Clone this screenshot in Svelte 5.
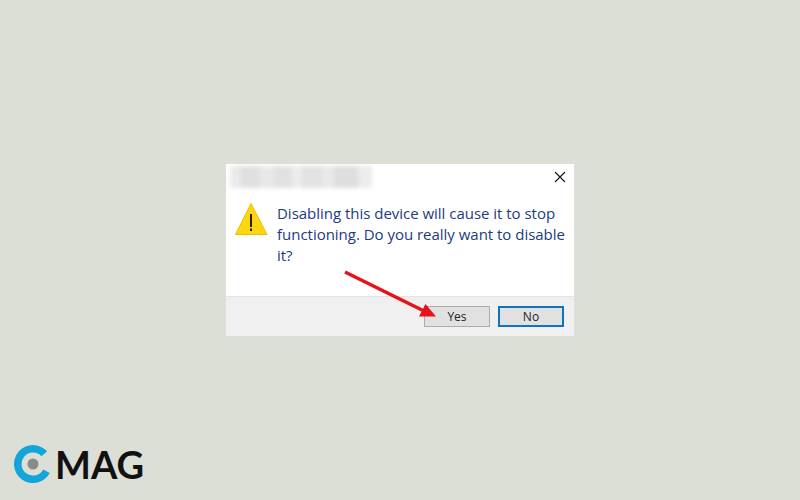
<script>
  const message = "Disabling this device will cause it to stop functioning. Do you really want to disable it?";
</script>

<div class="page">
  <div class="dialog">
    <div class="titlebar">
      <div class="blurred-title"></div>
      <svg class="close" width="12" height="12" viewBox="0 0 12 12">
        <path d="M1 1 L11 11 M11 1 L1 11" stroke="#111" stroke-width="1.1" fill="none" />
      </svg>
    </div>
    <div class="body">
      <svg class="warn" width="34" height="34" viewBox="0 0 34 34">
        <path d="M16 1.500 L32 32.500 L0.500 32.500 Z" fill="#fdd60f" stroke="#eebd00" stroke-width="1" stroke-linejoin="round" />
        <rect x="15" y="12" width="2" height="13" fill="#222" />
        <rect x="15" y="26.500" width="2" height="2.500" fill="#222" />
      </svg>
      <p class="message">{message}</p>
    </div>
    <div class="footer">
      <button class="btn">Yes</button>
      <button class="btn primary">No</button>
    </div>
    <svg class="arrow" width="110" height="60" viewBox="0 0 110 60">
      <path d="M1 2 L82 42" stroke="#e6131b" stroke-width="3.500" fill="none" />
      <path d="M92 46.500 L75 46.500 L81.500 34 Z" fill="#e6131b" />
    </svg>
  </div>
  <div class="logo">
    <svg width="38" height="38" viewBox="0 0 38 38">
      <path d="M33.100 6.300 A19 19 0 1 0 35.800 27.900 L29.200 24.400 A11.500 11.500 0 1 1 27.500 11.300 Z" fill="#12a5dc" />
      <circle cx="19" cy="19" r="5.500" fill="#8a8a8a" />
    </svg>
    <span class="mag">MAG</span>
  </div>
</div>

<style>
  :global(body) {
    margin: 0;
  }
  .page {
    width: 800px;
    height: 500px;
    background: #dcdfd6;
    position: relative;
    display: flex;
    align-items: center;
    justify-content: center;
    overflow: hidden;
  }
  .dialog {
    width: 348px;
    height: 172px;
    background: #fff;
    display: flex;
    flex-direction: column;
    position: relative;
  }
  .titlebar {
    height: 25px;
    display: flex;
    align-items: center;
    justify-content: space-between;
    padding: 0 8px 0 4px;
    flex-shrink: 0;
  }
  .blurred-title {
    width: 142px;
    height: 22px;
    background: linear-gradient(90deg, #ebebeb 0 10px, #e0e0e0 10px 30px, #e8e8e8 30px 44px, #e1e1e1 44px 62px, #ececec 62px 72px, #e2e2e2 72px 92px, #e9e9e9 92px 104px, #dedede 104px 128px, #ececec 128px);
    filter: blur(2px);
  }
  .close {
    margin-top: 1px;
  }
  .body {
    flex: 1;
    display: flex;
    gap: 8px;
    padding: 14px 6px 0 9px;
    align-items: flex-start;
  }
  .warn {
    flex-shrink: 0;
    margin-top: -1px;
  }
  .message {
    margin: 0;
    font: 15px/21px "Open Sans", "Noto Sans", sans-serif;
    letter-spacing: -0.02px;
    color: #1c3b82;
  }
  .footer {
    height: 40px;
    background: #f0f0f0;
    border-top: 1px solid #e4e4e4;
    box-sizing: border-box;
    display: flex;
    justify-content: flex-end;
    align-items: center;
    gap: 8px;
    padding: 0 10px 0 0;
  }
  .btn {
    width: 66px;
    height: 21px;
    background: #e1e1e1;
    border: 1px solid #adadad;
    padding: 0;
    font: 12px "Open Sans", "Noto Sans", sans-serif;
    color: #222;
    box-sizing: border-box;
  }
  .btn.primary {
    border: 2px solid #0f74bd;
  }
  .arrow {
    position: absolute;
    left: 118px;
    top: 106px;
  }
  .logo {
    position: absolute;
    left: 14px;
    top: 445px;
    display: flex;
    align-items: center;
    gap: 3px;
  }
  .mag {
    font: 700 38px/38px "Lato", "Liberation Sans", sans-serif;
    color: #111;
  }
</style>
